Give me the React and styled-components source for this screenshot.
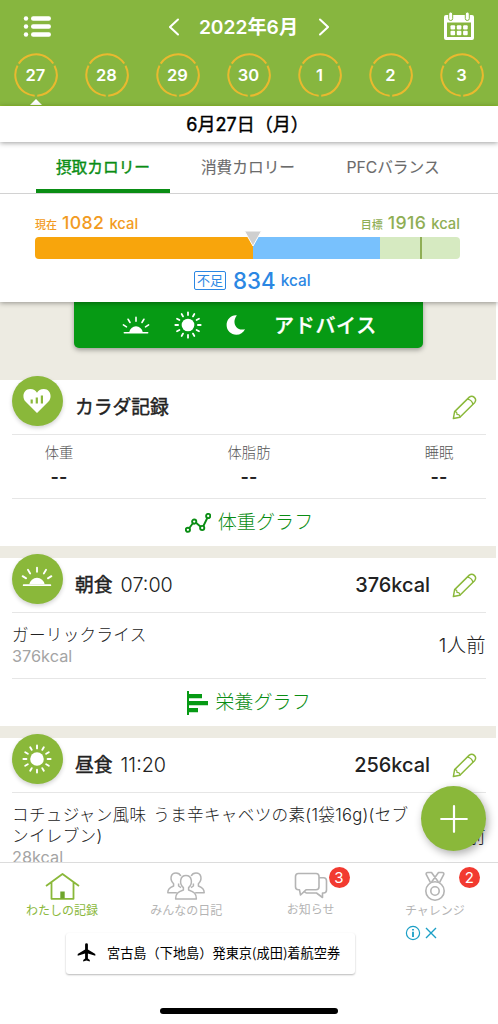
import styled, { createGlobalStyle } from 'styled-components'

const GlobalStyle = createGlobalStyle`
  :root {
    --color-green: #87b63f;
    --color-lime: #8ab83a;
    --color-deep: #069a14;
    --color-link: #0a8d14;
    --color-orange: #f8a50c;
    --color-blue: #2b87e3;
    --color-beige: #edebe2;
    --color-line: #e6e6e6;
    --color-text: #222;
  }

  * {
    box-sizing: border-box;
  }

  body {
    margin: 0;
    background-color: #fff;
    color: var(--color-text);
    font-family: Inter, 'Noto Sans CJK JP', sans-serif;
  }

  svg {
    display: block;
    flex: none;
  }
`

const Screen = styled.div`
  position: relative;
  display: flex;
  flex-direction: column;
  width: 498px;
  height: 1024px;
  overflow: hidden;
`

const Header = styled.header`
  flex: none;
  height: 106px;
  background-color: var(--color-green);
  border-bottom: 1px solid #8fc02f;
`

const TopBar = styled.div`
  display: flex;
  align-items: center;
  justify-content: space-between;
  height: 53px;
  padding: 0 24px 0 23px;
`

const MonthNav = styled.div`
  display: flex;
  align-items: center;
  gap: 20px;
  margin-left: 2px;
`

const Month = styled.h1`
  display: flex;
  justify-content: center;
  margin: 0;
  width: 100px;
  white-space: nowrap;
  font-size: 19.2px;
  line-height: 24px;
  font-weight: 600;
  color: #fff;
`

const Days = styled.div`
  display: grid;
  grid-template-columns: repeat(7, 1fr);
  height: 52px;
  padding-right: 1px;
`

const Day = styled.div`
  display: flex;
  flex-direction: column;
  align-items: center;
  justify-content: space-between;
`

const Ring = styled.div`
  display: grid;
  place-items: center;
  height: 44px;

  > * {
    grid-area: 1 / 1;
  }
`

const DayNumber = styled.span`
  padding-bottom: 1px;
  font-size: 16.5px;
  font-weight: 600;
  color: #fff;
`

const Notch = styled.div`
  border: 6px solid transparent;
  border-top: 0;
  border-bottom-color: #fff;
`

const DateBar = styled.div`
  position: relative;
  z-index: 2;
  flex: none;
  display: flex;
  align-items: center;
  justify-content: center;
  height: 36px;
  padding: 0 3px 2px 0;
  background-color: #fff;
  box-shadow: 0 1px 5px rgba(0, 0, 0, 0.38);
  font-size: 18px;
  font-weight: 400;
  -webkit-text-stroke: 0.4px;
  color: #000;
`

const Summary = styled.section`
  position: relative;
  z-index: 1;
  flex: none;
  display: flex;
  flex-direction: column;
  height: 160px;
  background-color: #fff;
  box-shadow: 0 1px 5px rgba(0, 0, 0, 0.38);
`

const Tabs = styled.div`
  display: flex;
  justify-content: space-between;
  height: 52px;
  padding: 0 38px 0 36px;
  border-bottom: 1px solid #d2d2d2;
`

const Tab = styled.div`
  display: flex;
  align-items: center;
  justify-content: center;
  width: 134px;
  height: 51px;
  padding-top: 2px;
  border-bottom: 4px solid ${({ active }) => (active ? 'var(--color-link)' : 'transparent')};
  font-size: 15.7px;
  font-weight: 400;
  -webkit-text-stroke: ${({ active }) => (active ? '0.4px' : '0.1px')};
  color: ${({ active }) => (active ? 'var(--color-link)' : '#6b6b6b')};
`

const GaugeLabels = styled.div`
  display: flex;
  justify-content: space-between;
  align-items: baseline;
  height: 27px;
  margin-top: 15px;
  margin-bottom: 1px;
  padding: 0 38px 0 35px;
`

const Amount = styled.div`
  color: ${({ color }) => color};
  white-space: nowrap;
  line-height: 27px;
  font-size: 11px;
  font-weight: 500;
`

const AmountValue = styled.span`
  margin: 0 5px;
  font-size: 17.7px;
  letter-spacing: 0.4px;
`

const Unit = styled.span`
  font-size: 14.8px;
`

const Gauge = styled.div`
  position: relative;
  display: flex;
  height: 22px;
  margin: 0 38px 0 35px;
`

const GaugePart = styled.div`
  flex: ${({ grow }) => grow};
  background-color: ${({ color }) => color};

  &:first-child {
    border-radius: 4px 0 0 4px;
  }

  &:nth-child(3) {
    border-radius: 0 4px 4px 0;
  }
`

const GoalMark = styled.div`
  position: absolute;
  left: 385px;
  width: 2px;
  height: 22px;
  background-color: #8fae55;
`

const Pointer = styled.svg`
  position: absolute;
  left: 208px;
  top: -7px;
`

const Shortage = styled.div`
  display: flex;
  align-items: center;
  height: 28px;
  margin: 7px 0 0 194px;
  color: var(--color-blue);
  font-size: 15.4px;
  font-weight: 500;
  white-space: nowrap;
`

const ShortageTag = styled.span`
  width: 32px;
  height: 19px;
  border: 1px solid var(--color-blue);
  border-radius: 2px;
  text-align: center;
  font-size: 13px;
  font-weight: 400;
  line-height: 17px;
`

const ShortageValue = styled.span`
  margin: 0 5px 0 7px;
  font-size: 22.3px;
`

const Content = styled.main`
  flex: 1;
  min-height: 0;
  width: 496px;
  overflow: hidden;
  background-color: var(--color-beige);
`

const AdviceButton = styled.div`
  display: flex;
  align-items: center;
  width: 349px;
  height: 46px;
  margin: 0 0 32px 74px;
  padding-left: 48px;
  border-radius: 0 0 5px 5px;
  background-color: var(--color-deep);
  box-shadow: 0 2px 5px rgba(0, 0, 0, 0.35);
  color: #fff;
  font-size: 20px;
  font-weight: 500;
  letter-spacing: 0.7px;
  -webkit-text-stroke: 0.3px;

  svg + svg {
    margin-left: 24px;
  }

  span {
    margin-left: 28px;
    padding-bottom: 2px;
  }
`

const Card = styled.section`
  display: flow-root;
  margin-bottom: 12px;
  padding: 0 10px 0 12px;
  background-color: #fff;
`

const CardHead = styled.div`
  display: flex;
  align-items: center;
  height: 55px;
  padding-right: 9px;
  border-bottom: 1px solid var(--color-line);
`

const RoundIcon = styled.div`
  display: flex;
  align-items: center;
  justify-content: center;
  width: 50.5px;
  height: 50.5px;
  margin: -12px 12.5px 0 0;
  padding-bottom: ${({ lift }) => lift || 0}px;
  border-radius: 50%;
  background-color: var(--color-lime);
  box-shadow: 0 2px 4px rgba(0, 0, 0, 0.18);
`

const CardTitle = styled.h2`
  margin: 0;
  padding-bottom: 3px;
  font-size: 18.8px;
  font-weight: 400;
  -webkit-text-stroke: 0.45px;
`

const Time = styled.span`
  margin-left: 8px;
  font-size: 19.8px;
  font-weight: 300;
`

const Total = styled.span`
  margin: 0 22px 0 auto;
  font-size: 19.9px;
  font-weight: 500;
`

const Stats = styled.div`
  display: flex;
  justify-content: space-between;
  height: 64px;
  border-bottom: 1px solid var(--color-line);
`

const Stat = styled.div`
  width: 94px;
  padding-top: 7px;
  text-align: center;
  font-size: 14.3px;
  line-height: 22px;
  font-weight: 300;
  color: #555;

  b {
    display: block;
    margin-top: 2px;
    font-size: 18px;
    font-weight: 600;
    color: var(--color-text);
  }
`

const GraphLink = styled.div`
  display: flex;
  align-items: center;
  justify-content: center;
  gap: 7px;
  height: 47px;
  color: var(--color-link);
  font-size: 19.1px;
  font-weight: 300;

  span {
    padding-bottom: 3px;
  }
`

const Food = styled.div`
  display: flex;
  align-items: center;
  justify-content: space-between;
  height: ${({ tall }) => (tall ? '88px' : '66px')};
  border-bottom: 1px solid var(--color-line);
`

const FoodName = styled.div`
  width: 405px;
  font-size: 16.6px;
  line-height: 21px;
  font-weight: 300;
  letter-spacing: 0.3px;
  word-spacing: 2px;
  word-break: break-all;
`

const FoodEnergy = styled.div`
  font-size: 16.3px;
  line-height: 21px;
  color: #a4a4a4;
`

const Serving = styled.span`
  padding-bottom: 3px;
  font-size: 19.3px;
  font-weight: 300;
  letter-spacing: 0.4px;
  white-space: nowrap;
`

const AddButton = styled.div`
  position: absolute;
  right: 12px;
  top: 786px;
  display: flex;
  align-items: center;
  justify-content: center;
  width: 65px;
  height: 65px;
  border-radius: 50%;
  background-color: var(--color-lime);
  box-shadow: 2px 3px 8px rgba(0, 0, 0, 0.32);
`

const Nav = styled.nav`
  flex: none;
  display: grid;
  grid-template-columns: repeat(4, 1fr);
  height: 60px;
  padding-right: 1px;
  border-top: 1px solid #dcdcdc;
  background-color: #fff;
`

const NavItem = styled.div`
  position: relative;
  display: flex;
  flex-direction: column;
  align-items: center;
  padding-top: 8px;
  color: ${({ active }) => (active ? 'var(--color-lime)' : '#b4b4b4')};
  font-size: 12px;
  line-height: 18px;

  svg {
    margin-bottom: ${({ raised }) => (raised ? '0' : '1px')};
  }
`

const Badge = styled.span`
  position: absolute;
  left: ${({ left }) => left}px;
  top: 4px;
  width: 21px;
  height: 21px;
  border-radius: 50%;
  background-color: #f23a30;
  color: #fff;
  text-align: center;
  font-size: 15px;
  line-height: 21px;
`

const Ad = styled.div`
  flex: none;
  display: flex;
  align-items: flex-start;
  height: 86px;
  padding-left: 66px;
  background-color: #fff;
`

const AdCard = styled.div`
  display: flex;
  align-items: center;
  gap: 11px;
  width: 289px;
  height: 41px;
  margin: 11px 50px 0 0;
  padding: 0 0 2px 11px;
  border-radius: 3px;
  box-shadow: 0 1px 2px rgba(0, 0, 0, 0.28);
  color: #000;
  font-family: 'Noto Sans CJK JP', sans-serif;
  font-size: 13.2px;
  white-space: nowrap;
`

const AdMarks = styled.div`
  display: flex;
  gap: 4px;
  padding-top: 3px;
`

const HomeIndicator = styled.div`
  flex: none;
  width: 178px;
  height: 6px;
  margin: 0 0 10px 160px;
  border-radius: 3px;
  background-color: #000;
`

function MenuIcon() {
  return (
    <svg width="28" height="22" viewBox="0 0 28 22" fill="#fff">
      {[2.5, 10.5, 18.5].map((y) => (
        <g key={y}>
          <circle cx="3" cy={y} r="2.2" />
          <rect x="8" y={y - 2.2} width="20" height="4.4" rx="2.2" />
        </g>
      ))}
    </svg>
  )
}

function Chevron({ right }) {
  return (
    <svg width="10" height="18" viewBox="0 0 10 18" fill="none" stroke="#fff" strokeWidth="2" strokeLinecap="round">
      <path d={right ? 'M1 1.5L9 9L1 16.5' : 'M9 1.5L1 9L9 16.5'} />
    </svg>
  )
}

function CalendarIcon() {
  return (
    <svg width="30" height="29" viewBox="0 0 30 29">
      <path
        d="M2 3H28Q30 3 30 5V26Q30 28 28 28H2Q0 28 0 26V5Q0 3 2 3Z M3 10.5V25H27V10.5Z"
        fill="#fff"
        fillRule="evenodd"
      />
      <g fill="#fff" stroke="#87b63f" strokeWidth="1">
        <rect x="4.7" y="0" width="4" height="8.5" rx="2" />
        <rect x="21.3" y="0" width="4" height="8.5" rx="2" />
      </g>
      {[13.2, 18.8].map((y) =>
        [6.5, 12.8, 19.1].map((x) => <rect key={`${x}-${y}`} x={x} y={y} width="4.6" height="4.4" rx="1" fill="#fff" />)
      )}
    </svg>
  )
}

function DayRing() {
  return (
    <svg width="44" height="44" viewBox="0 0 44 44" fill="none" stroke="#e9b92f" strokeWidth="2">
      <circle
        cx="22"
        cy="22"
        r="20.7"
        pathLength="360"
        strokeDasharray="113 7"
        transform="rotate(-146.5 22 22)"
      />
    </svg>
  )
}

function SunriseIcon({ width = 32 }) {
  return (
    <svg width={width} height={(width * 20) / 30} viewBox="0 0 30 20" stroke="#fff" strokeWidth="1.7" strokeLinecap="round">
      <path d="M7.8 17.2A7.3 7.3 0 0 1 22.2 17.2Z" fill="#fff" stroke="none" />
      <path d="M2.5 18H27.5M15 1.5V5.5M6.5 3.5L8.6 7M23.5 3.5L21.4 7M1.5 9.5L4.8 11.6M28.5 9.5L25.2 11.6" />
    </svg>
  )
}

function SunIcon({ size = 30 }) {
  return (
    <svg width={size} height={size} viewBox="0 0 30 30" stroke="#fff" strokeWidth="1.9" strokeLinecap="round">
      <circle cx="15" cy="15" r="6.8" fill="#fff" stroke="none" />
      {Array.from({ length: 12 }, (_, i) => (
        <path key={i} d="M15 1.4V4.4" transform={`rotate(${i * 30} 15 15)`} />
      ))}
    </svg>
  )
}

function MoonIcon() {
  return (
    <svg width="20" height="20" viewBox="0 0 20 20" fill="#fff">
      <path d="M10.8 0.4C5 -0.2 0.6 4.6 0.6 10C0.6 15.6 5 19.7 10.3 19.7C14.2 19.7 17.4 17.7 19 14.2C9.8 16.6 5.4 7.2 10.8 0.4Z" />
    </svg>
  )
}

function HeartIcon() {
  return (
    <svg width="28" height="26" viewBox="0 0 28 26">
      <path d="M14 25L2.5 13.5C-1.5 9.2 0.5 1 7.2 1C10.5 1 12.8 2.7 14 4.8C15.2 2.7 17.5 1 20.8 1C27.5 1 29.5 9.2 25.5 13.5Z" fill="#fff" />
      <path d="M8.7 15.5V11.4M13.8 15.5V9.5M18.9 15.5V7.4" stroke="#8ab83a" strokeWidth="2.2" />
    </svg>
  )
}

function PencilIcon() {
  return (
    <svg
      width="25"
      height="25"
      viewBox="0 0 26 26"
      fill="none"
      stroke="#8ab83a"
      strokeWidth="1.5"
      strokeLinejoin="round"
    >
      <path d="M1.4 24.5L2.7 17.3L18 2.2C21.5 -0.7 26.4 4 23.7 7.7L8.2 23.2Z" />
      <path d="M2.7 17.3C4.6 17.2 5.3 18.2 5.2 20.2C7.3 20.2 8.5 21.2 8.2 23.2M16 4.2C19.4 4.8 21.2 6.7 21.7 9.7" strokeWidth="1.3" />
    </svg>
  )
}

function LineGraphIcon() {
  return (
    <svg width="26" height="20" viewBox="0 0 26 20" fill="none" stroke="#0a8d14" strokeWidth="1.9">
      <path d="M4.4 15L7.8 10.2M11 9.8L15.4 13.5M18.4 13L22.3 5" />
      <circle cx="2.9" cy="16.8" r="2.1" />
      <circle cx="9.2" cy="8.6" r="2.1" />
      <circle cx="17.2" cy="15" r="2.1" />
      <circle cx="23.2" cy="3" r="2.1" />
    </svg>
  )
}

function BarGraphIcon() {
  return (
    <svg width="21" height="24" viewBox="0 0 21 24" fill="#069a14">
      <path d="M0 0H2V24H0ZM2 3H15V7.2H2ZM2 10H21V14.2H2ZM2 17H11V21.2H2Z" />
    </svg>
  )
}

function HouseIcon() {
  return (
    <svg width="35" height="30" viewBox="0 0 35 30" fill="none" stroke="#8ab83a" strokeWidth="1.8">
      <path d="M1 15L17.5 3L34 15M6.5 11.5V27.8H28.5V11.5" strokeLinejoin="round" />
      <path d="M15.3 20.5H19.7V27.5H15.3Z" fill="#6fa52c" stroke="none" />
    </svg>
  )
}

function PeopleIcon() {
  return (
    <svg width="38" height="30" viewBox="0 0 38 30" fill="none" stroke="#b4b4b4" strokeWidth="1.5" strokeLinejoin="round">
      <path d="M9.8 21.8H0.8C0.8 18 2.5 16.8 6.6 15V12.8C2.6 9 3.2 2 9 2C11.4 2 13 3.2 13.8 5" />
      <path d="M28.2 21.8H37.2C37.2 18 35.5 16.8 31.4 15V12.8C35.4 9 34.8 2 29 2C26.6 2 25 3.2 24.2 5" />
      <path d="M16.4 19V16.6C11.8 12.6 13 4.6 19 4.6C25 4.6 26.2 12.6 21.6 16.6V19C27.4 21 29.4 22.5 29.4 28H8.6C8.6 22.5 10.6 21 16.4 19Z" />
      <path d="M11.6 12.6V15L14 16.6M26.4 12.6V15L24 16.6" />
    </svg>
  )
}

function ChatIcon() {
  return (
    <svg width="34" height="30" viewBox="0 0 34 30" fill="none" stroke="#b4b4b4" strokeWidth="1.6" strokeLinejoin="round">
      <path d="M5.5 18.8H4.5Q1.5 18.8 1.5 15.8V5.5Q1.5 2.5 4.5 2.5H22Q25 2.5 25 5.5V15.8Q25 18.8 22 18.8H12L6.5 24Z" />
      <path d="M25 6.8H29.5Q32.5 6.8 32.5 9.8V19Q32.5 22 29.5 22H28.5V26.5L22.5 22H12.5Q10.8 21.8 10.3 20.3" />
    </svg>
  )
}

function MedalIcon() {
  return (
    <svg width="22" height="30" viewBox="0 0 22 30" fill="none" stroke="#b4b4b4" strokeWidth="1.6" strokeLinejoin="round">
      <circle cx="11" cy="20" r="9.2" />
      <circle cx="11" cy="20" r="4.2" />
      <path d="M6.5 11.6L2.2 3.4Q1.8 1.5 3.8 1.5H7.5L14.4 11M15.5 11.6L19.8 3.4Q20.2 1.5 18.2 1.5H14.5L7.6 11" />
    </svg>
  )
}

function PlaneIcon() {
  return (
    <svg width="19" height="19" viewBox="0 0 19 19" fill="#000">
      <path d="M18.3 12.8V11L10.9 6.4V1.6A1.4 1.4 0 0 0 8.1 1.6V6.4L0.7 11V12.8L8.1 10.5V15.6L6.2 17V18.5L9.5 17.5L12.8 18.5V17L10.9 15.6V10.5Z" />
    </svg>
  )
}

const days = [27, 28, 29, 30, 1, 2, 3]
const stats = ['体重', '体脂肪', '睡眠']

function App() {
  return (
    <>
      <GlobalStyle />
      <Screen>
        <Header>
          <TopBar>
            <MenuIcon />
            <MonthNav>
              <Chevron />
              <Month>2022年6月</Month>
              <Chevron right />
            </MonthNav>
            <CalendarIcon />
          </TopBar>
          <Days>
            {days.map((day) => (
              <Day key={day}>
                <Ring>
                  <DayRing />
                  <DayNumber>{day}</DayNumber>
                </Ring>
                {day === 27 && <Notch />}
              </Day>
            ))}
          </Days>
        </Header>
        <DateBar>6月27日（月）</DateBar>
        <Summary>
          <Tabs>
            <Tab active>摂取カロリー</Tab>
            <Tab>消費カロリー</Tab>
            <Tab>PFCバランス</Tab>
          </Tabs>
          <GaugeLabels>
            <Amount color="#f29b22">
              現在
              <AmountValue>1082</AmountValue>
              <Unit>kcal</Unit>
            </Amount>
            <Amount color="#8fae55">
              目標
              <AmountValue>1916</AmountValue>
              <Unit>kcal</Unit>
            </Amount>
          </GaugeLabels>
          <Gauge>
            <GaugePart grow={217.5} color="var(--color-orange)" />
            <GaugePart grow={127.5} color="#78c1fd" />
            <GaugePart grow={80} color="#d6eac1" />
            <GoalMark />
            <Pointer width="20" height="18" viewBox="0 0 20 18">
              <path d="M1.5 1H18.5L10 16Z" fill="#cfcfcf" stroke="#fff" />
            </Pointer>
          </Gauge>
          <Shortage>
            <ShortageTag>不足</ShortageTag>
            <ShortageValue>834</ShortageValue>
            kcal
          </Shortage>
        </Summary>
        <Content>
          <AdviceButton>
            <SunriseIcon width={28} />
            <SunIcon size={28} />
            <MoonIcon />
            <span>アドバイス</span>
          </AdviceButton>
          <Card>
            <CardHead>
              <RoundIcon>
                <HeartIcon />
              </RoundIcon>
              <CardTitle>カラダ記録</CardTitle>
              <Total />
              <PencilIcon />
            </CardHead>
            <Stats>
              {stats.map((label) => (
                <Stat key={label}>
                  {label}
                  <b>--</b>
                </Stat>
              ))}
            </Stats>
            <GraphLink>
              <LineGraphIcon />
              <span>体重グラフ</span>
            </GraphLink>
          </Card>
          <Card>
            <CardHead>
              <RoundIcon lift={5}>
                <SunriseIcon />
              </RoundIcon>
              <CardTitle>朝食</CardTitle>
              <Time>07:00</Time>
              <Total>376kcal</Total>
              <PencilIcon />
            </CardHead>
            <Food>
              <div>
                <FoodName>ガーリックライス</FoodName>
                <FoodEnergy>376kcal</FoodEnergy>
              </div>
              <Serving>1人前</Serving>
            </Food>
            <GraphLink>
              <BarGraphIcon />
              <span>栄養グラフ</span>
            </GraphLink>
          </Card>
          <Card>
            <CardHead>
              <RoundIcon>
                <SunIcon />
              </RoundIcon>
              <CardTitle>昼食</CardTitle>
              <Time>11:20</Time>
              <Total>256kcal</Total>
              <PencilIcon />
            </CardHead>
            <Food tall>
              <div>
                <FoodName>コチュジャン風味 うま辛キャベツの素(1袋16g)(セブンイレブン)</FoodName>
                <FoodEnergy>28kcal</FoodEnergy>
              </div>
              <Serving>1人前</Serving>
            </Food>
          </Card>
        </Content>
        <Nav>
          <NavItem active>
            <HouseIcon />
            わたしの記録
          </NavItem>
          <NavItem>
            <PeopleIcon />
            みんなの日記
          </NavItem>
          <NavItem raised>
            <ChatIcon />
            お知らせ
            <Badge left={80}>3</Badge>
          </NavItem>
          <NavItem>
            <MedalIcon />
            チャレンジ
            <Badge left={86}>2</Badge>
          </NavItem>
        </Nav>
        <Ad>
          <AdCard>
            <PlaneIcon />
            宮古島（下地島）発東京(成田)着航空券
          </AdCard>
          <AdMarks>
            <svg width="16" height="16" viewBox="0 0 16 16" fill="none" stroke="#1b9fc6">
              <circle cx="8" cy="8" r="6.6" strokeWidth="1.2" />
              <path d="M8 4V5.6M8 6.8V12" strokeWidth="1.8" />
            </svg>
            <svg width="12" height="16" viewBox="0 0 12 16" fill="none" stroke="#1b9fc6" strokeWidth="1.4">
              <path d="M1 3L11 13M11 3L1 13" />
            </svg>
          </AdMarks>
        </Ad>
        <HomeIndicator />
        <AddButton>
          <svg width="28" height="28" viewBox="0 0 28 28" stroke="#fff" strokeWidth="2.2" strokeLinecap="round">
            <path d="M14 1.2V26.8M1.2 14H26.8" />
          </svg>
        </AddButton>
      </Screen>
    </>
  )
}

export default App
